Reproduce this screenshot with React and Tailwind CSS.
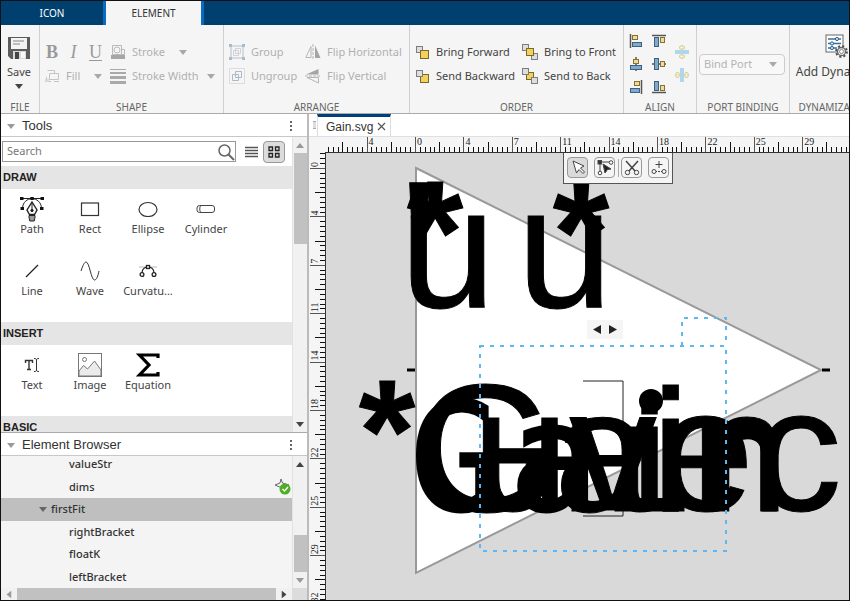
import { useState } from 'react';
import clsx from 'clsx';

const TREE = [
  { name: 'valueStr' },
  { name: 'dims', badge: true },
  { name: 'firstFit', group: true },
  { name: 'rightBracket' },
  { name: 'floatK' },
  { name: 'leftBracket' },
];

const RULER_STEP = 48.4;
const RULER_LABELS = ['4', '0', '4', '7', '11', '14', '18', '22', '25', '29', '32'];

const range = (n) => Array.from({ length: n }, (_, i) => i);

/* ---------- small shared pieces ---------- */

function Caret({ className }) {
  return (
    <svg width="8" height="5" viewBox="0 0 8 5" className={clsx('shrink-0', className)} fill="currentColor">
      <path d="M0 0h8L4 5z" />
    </svg>
  );
}

function Section({ label, className, children }) {
  return (
    <section className={clsx('flex shrink-0 flex-col border-r border-[#cfcfcf] pt-[15px]', className)}>
      <div className="min-h-0 flex-1">{children}</div>
      <h2 className="text-center text-[10px] leading-3 whitespace-nowrap text-[#666]">{label}</h2>
    </section>
  );
}

function ToolButton({ icon, children, dim, caret, className }) {
  return (
    <button
      className={clsx(
        'flex h-6 items-center gap-1.5 text-[11px] whitespace-nowrap',
        dim ? 'text-[#b0b0b0]' : 'text-[#444]',
        className
      )}
    >
      <span className="shrink-0">{icon}</span>
      <span>{children}</span>
      {caret && <Caret className="ml-auto text-[#a8a8a8]" />}
    </button>
  );
}

/* ---------- toolbar icons ---------- */

const SaveIcon = () => (
  <svg width="24" height="24" viewBox="0 0 24 24">
    <path d="M1 1h22v22H4l-3-3z" fill="#5c5c5c" />
    <path d="M4 2h16v11H4z" fill="#f4f4f4" />
    <path d="M6 5h11M6 8h7" stroke="#aaa" strokeWidth="1.3" />
    <path d="M6 15h13v8H6z" fill="#d8d8d8" />
    <path d="M8 16h4v7H8z" fill="#444" />
    <path d="M14 16h4v6h-4z" fill="#f8f8f8" />
  </svg>
);

const StrokeIcon = () => (
  <svg width="16" height="16" viewBox="0 0 16 16" fill="none" stroke="#b9b9b9">
    <path d="M2.5 1.5h9v9h-9zM12 5.5h2.5v5H12" />
    <circle cx="7" cy="6" r="3" />
    <path d="M1 11h14v4H1z" fill="#a6a6a6" stroke="none" />
  </svg>
);

const FillIcon = () => (
  <svg width="16" height="16" viewBox="0 0 16 16" fill="none" stroke="#c4c4c4">
    <path d="M3.5 2.5h7v3M2.5 9v4M5.5 5.5h9v6h-9zM1 13.5h6M10 13.5h5" />
    <path d="M1 11h4v3H1z" fill="#d8d8d8" stroke="none" />
  </svg>
);

const WidthIcon = () => (
  <svg width="16" height="16" viewBox="0 0 16 16" fill="#a9a9a9">
    <path d="M0 1h16v1H0zM0 4h16v2H0zM0 8h16v3H0zM0 13h16v3H0z" />
  </svg>
);

const GroupIcon = () => (
  <svg width="16" height="16" viewBox="0 0 16 16" fill="none">
    <path d="M2 2h12v12H2z" stroke="#b4bfc9" />
    <path d="M4.5 6.5h5v5h-5zM6.5 4.5h5v5h-5z" stroke="#cdd3d8" />
    <path d="M0 0h3v3H0zM13 0h3v3h-3zM0 13h3v3H0zM13 13h3v3h-3z" fill="#a9bac9" />
  </svg>
);

const UngroupIcon = () => (
  <svg width="16" height="16" viewBox="0 0 16 16" fill="none">
    <path d="M.5.5h15v15H.5z" stroke="#dcdcdc" />
    <path d="M3.5 6.5h6v6h-6zM6.5 3.5h6v6h-6z" stroke="#aab9cb" />
  </svg>
);

const FlipHIcon = () => (
  <svg width="16" height="16" viewBox="0 0 16 16" fill="none">
    <path d="M6 2.5V13.5H.8z" stroke="#b5b5b5" />
    <path d="M8 0v16" stroke="#b5b5b5" strokeDasharray="3 1" />
    <path d="M10 1.5V14h5.5z" fill="#a4a4a4" />
  </svg>
);

const FlipVIcon = () => (
  <svg width="16" height="16" viewBox="0 0 16 16" fill="none">
    <path d="M13.5 1v5.5H1z" fill="#a4a4a4" />
    <path d="M0 8h16" stroke="#b5b5b5" strokeDasharray="3 1" />
    <path d="M2 9.5h11.5V15z" stroke="#b5b5b5" />
  </svg>
);

function OrderIcon({ kind }) {
  const gray = { fill: '#dedede', stroke: '#7d7d7d' };
  const gold = { fill: '#f3d25c', stroke: '#7c682a' };
  const back = <rect x="1.5" y="1.5" width="6" height="6" {...gray} />;
  if (kind === 'forward' || kind === 'backward') {
    const front = <rect x="5.5" y="5.5" width="8" height="8" {...gold} />;
    return (
      <svg width="15" height="15" viewBox="0 0 15 15">
        {kind === 'forward' ? back : front}
        {kind === 'forward' ? front : back}
      </svg>
    );
  }
  const mid = <rect x="4.5" y="4.5" width="7" height="7" {...gold} />;
  const grays = (
    <>
      <rect x=".5" y=".5" width="6" height="6" {...gray} />
      <rect x="9.5" y="9.5" width="6" height="6" {...gray} />
    </>
  );
  return (
    <svg width="16" height="16" viewBox="0 0 16 16">
      {kind === 'front' ? grays : mid}
      {kind === 'front' ? mid : grays}
    </svg>
  );
}

const blue = { fill: '#7fa9cf', stroke: '#3f6180' };
const tan = { fill: '#f0dc9a', stroke: '#8a7030' };

const ALIGN_ICONS = {
  left: (
    <>
      <path d="M1.5 0v14" stroke="#555" strokeWidth="1.5" />
      <rect x="3.5" y="1.5" width="5" height="4" {...tan} />
      <rect x="3.5" y="8.5" width="9" height="4" {...blue} />
    </>
  ),
  center: (
    <>
      <path d="M7 0v14" stroke="#555" strokeWidth="1.5" />
      <rect x="4.5" y="2.5" width="5" height="4" {...tan} />
      <rect x="1.5" y="8.5" width="11" height="4" {...blue} />
    </>
  ),
  right: (
    <>
      <path d="M12.5 0v14" stroke="#555" strokeWidth="1.5" />
      <rect x="5.5" y="1.5" width="5" height="4" {...tan} />
      <rect x="1.5" y="8.5" width="9" height="4" {...blue} />
    </>
  ),
  top: (
    <>
      <path d="M0 1.5h14" stroke="#555" strokeWidth="1.5" />
      <rect x="2.5" y="3.5" width="4" height="9" {...blue} />
      <rect x="8.5" y="3.5" width="4" height="5" {...tan} />
    </>
  ),
  middle: (
    <>
      <path d="M0 7h14" stroke="#555" strokeWidth="1.5" />
      <rect x="2.5" y="1.5" width="4" height="11" {...blue} />
      <rect x="8.5" y="4.5" width="4" height="5" {...tan} />
    </>
  ),
  bottom: (
    <>
      <path d="M0 12.5h14" stroke="#555" strokeWidth="1.5" />
      <rect x="2.5" y="1.5" width="4" height="9" {...blue} />
      <rect x="8.5" y="5.5" width="4" height="5" {...tan} />
    </>
  ),
  spreadV: (
    <g opacity=".6">
      <path d="M7 0v14" stroke="#999" />
      <rect x="4.5" y="1" width="5" height="3" rx="1" fill="#f7f0a0" stroke="#c2b860" />
      <rect x="0" y="5" width="14" height="4" fill="#7fc4ea" />
      <rect x="4.5" y="10" width="5" height="3" rx="1" fill="#f7f0a0" stroke="#c2b860" />
    </g>
  ),
  spreadH: (
    <g opacity=".6">
      <path d="M0 7h14" stroke="#999" />
      <rect x="1" y="4.5" width="3" height="5" rx="1" fill="#f7f0a0" stroke="#c2b860" />
      <rect x="5" y="0" width="4" height="14" fill="#7fc4ea" />
      <rect x="10" y="4.5" width="3" height="5" rx="1" fill="#f7f0a0" stroke="#c2b860" />
    </g>
  ),
};

function AlignButton({ kind }) {
  return (
    <button aria-label={`Align ${kind}`} className="flex h-[23px] items-center">
      <svg width="14" height="14" viewBox="0 0 14 14">
        {ALIGN_ICONS[kind]}
      </svg>
    </button>
  );
}

const DynamizeIcon = () => (
  <svg width="24" height="24" viewBox="0 0 24 24" fill="none">
    <rect x="2" y="1" width="17" height="17" fill="#fff" stroke="#666" />
    <path d="M4 5h13M4 9.5h13M4 14h9" stroke="#3f6d96" strokeWidth="1.3" />
    <g fill="#cfe4f5" stroke="#2b6294">
      <circle cx="13" cy="5" r="1.6" />
      <circle cx="8" cy="9.5" r="1.6" />
      <circle cx="8" cy="14" r="1.6" />
    </g>
    <circle cx="17.5" cy="17.5" r="5.3" stroke="#555" strokeWidth="2.2" strokeDasharray="2.1 2.06" />
    <circle cx="17.5" cy="17.5" r="4" fill="#f2f2f2" stroke="#666" strokeWidth="1.3" />
    <circle cx="17.5" cy="17.5" r="2" fill="#fff" stroke="#888" />
  </svg>
);

/* ---------- palette icons ---------- */

const PALETTE_ICONS = {
  Path: (
    <svg width="26" height="26" viewBox="0 0 26 26" fill="none" stroke="#222">
      <path d="M3 2.5h20M13 2.5C8 3 4 6 3.5 12M13 2.5c5 .5 9 3.5 9.5 9.5" />
      <g fill="#111" stroke="none">
        <path d="M1 1h3.5v3H1zM11.3 1h3.5v3h-3.5zM21.5 1H25v3h-3.5zM1.5 11H5v3H1.5zM21 11h3.5v3H21z" />
      </g>
      <path d="M13 6l5 8-2.5 4.5h-5L8 14z" fill="#fff" strokeWidth="1.4" />
      <path d="M13 6v8" />
      <circle cx="13" cy="14.5" r="1.2" fill="#222" />
      <path d="M10 19.5h6v2l-.8 3.5h-4.4L10 21.5z" fill="#999" />
    </svg>
  ),
  Rect: (
    <svg width="20" height="16" viewBox="0 0 20 16" fill="none" stroke="#333">
      <rect x="1.5" y="2" width="17" height="12.5" strokeWidth="1.2" />
    </svg>
  ),
  Ellipse: (
    <svg width="22" height="16" viewBox="0 0 22 16" fill="none" stroke="#333">
      <ellipse cx="11" cy="8.5" rx="9" ry="7" strokeWidth="1.2" />
    </svg>
  ),
  Cylinder: (
    <svg width="20" height="10" viewBox="0 0 20 10" fill="none" stroke="#444">
      <rect x="1" y="1.5" width="17.5" height="7" rx="2.5" />
      <path d="M4.5 1.5c-1 2-1 5 0 7" />
    </svg>
  ),
  Line: (
    <svg width="14" height="14" viewBox="0 0 14 14" fill="none" stroke="#222">
      <path d="M1 13L13 1" strokeWidth="1.2" />
    </svg>
  ),
  Wave: (
    <svg width="20" height="20" viewBox="0 0 20 20" fill="none" stroke="#333">
      <path d="M1 10C3 4 4.5 1 6 1c3.5 0 5 18 8.5 18 2 0 3.5-4 4.5-9" />
    </svg>
  ),
  'Curvatu...': (
    <svg width="20" height="16" viewBox="0 0 20 16" fill="none" stroke="#222">
      <path d="M1 4h18" stroke="#bbb" />
      <path d="M4 10c0-4 3-6 6-6s6 2 6 6" strokeWidth="1.3" />
      <rect x="8.5" y="2.5" width="3" height="3" fill="#fff" strokeWidth="1.3" />
      <circle cx="4" cy="11.5" r="1.9" fill="#fff" strokeWidth="1.3" />
      <circle cx="16" cy="11.5" r="1.9" fill="#fff" strokeWidth="1.3" />
    </svg>
  ),
  Text: (
    <svg width="18" height="16" viewBox="0 0 18 16" fill="none" stroke="#333">
      <path d="M2.5 6V3.5h7V6M6 3.5v9M4 12.5h4" strokeWidth="1.4" />
      <path d="M11 1.5c2 0 2.5.5 2.5 1.5v10c0 1-.5 1.5-2.5 1.5M16 1.5c-2 0-2.5.5-2.5 1.5M16 14.5c-2 0-2.5-.5-2.5-1.5" />
    </svg>
  ),
  Image: (
    <svg width="24" height="24" viewBox="0 0 24 24" fill="none" stroke="#777">
      <path d="M1 18l4.5-5.5 4 3.5 7-8 6.5 9v6H1z" fill="#ebebeb" />
      <rect x=".5" y=".5" width="23" height="23" />
      <circle cx="6.5" cy="6.5" r="2" />
    </svg>
  ),
  Equation: (
    <svg width="24" height="26" viewBox="0 0 24 26" fill="none" stroke="#000">
      <path d="M22 6V3H3.5L13 13 3.5 23H22v-3" strokeWidth="3.2" />
    </svg>
  ),
};

function Palette({ title, items }) {
  return (
    <>
      <h3 className="h-[23px] shrink-0 bg-[#e5e5e5] pl-0.5 font-['Liberation_Sans',sans-serif] text-[11px] leading-[23px] font-bold text-[#222]">
        {title}
      </h3>
      {items && (
        <div className="flex w-[236px] shrink-0 flex-wrap pb-[9px] pl-0.5">
          {items.map((name) => (
            <button key={name} className="flex h-[62px] w-[58px] flex-col items-center pt-1.5 text-[11px] leading-3 text-[#444]">
              <span className="flex h-7 items-center">{PALETTE_ICONS[name]}</span>
              {name}
            </button>
          ))}
        </div>
      )}
    </>
  );
}

function PanelHeader({ title }) {
  return (
    <header className="flex h-[23px] shrink-0 items-center border-b border-[#c8c8c8] bg-white pt-0.5 pr-3.5 pl-1.5">
      <Caret className="text-[#999]" />
      <h2 className="ml-[7px] flex-1 font-['Liberation_Sans',sans-serif] text-[13px] leading-4 text-[#333]">{title}</h2>
      <button aria-label={`${title} menu`}>
        <svg width="3" height="11" viewBox="0 0 3 11" fill="#666">
          <path d="M0 0h2v2H0zM0 4h2v2H0zM0 8h2v2H0z" />
        </svg>
      </button>
    </header>
  );
}

function ToolsPanel() {
  const [query, setQuery] = useState('');

  return (
    <section className="flex min-h-0 flex-1 flex-col">
      <PanelHeader title="Tools" />
      <div className="flex min-h-0 flex-1">
        <div className="flex min-h-0 min-w-0 flex-1 flex-col overflow-hidden">
          <div className="flex h-[29px] shrink-0 items-center pl-px">
            <label className="flex h-[21px] flex-1 items-center border border-[#999] bg-white">
              <input
                aria-label="Search tools"
                placeholder="Search"
                value={query}
                onChange={(e) => setQuery(e.target.value)}
                className="min-w-0 flex-1 pl-1 text-[11px] text-[#333] outline-none placeholder:text-[#777]"
              />
              <svg width="18" height="18" viewBox="0 0 18 18" fill="none" stroke="#666">
                <circle cx="7.5" cy="7.5" r="5.5" strokeWidth="1.5" />
                <path d="M11.5 11.5L17 17" strokeWidth="2" />
              </svg>
            </label>
            <button aria-label="List view" className="ml-2 p-px">
              <svg width="13" height="12" viewBox="0 0 13 12" stroke="#555" strokeWidth="1.3">
                <path d="M0 1.5h13M0 4.5h13M0 7.5h13M0 10.5h13" />
              </svg>
            </button>
            <button
              aria-label="Grid view"
              className="mr-[7px] ml-1 flex size-[22px] items-center justify-center rounded border border-[#999] bg-[#dcdcdc]"
            >
              <svg width="12" height="12" viewBox="0 0 12 12" fill="none" stroke="#222" strokeWidth="1.3">
                <path d="M1 1h3.5v3.5H1zM7.5 1H11v3.5H7.5zM1 7.5h3.5V11H1zM7.5 7.5H11V11H7.5z" />
              </svg>
            </button>
          </div>
          <Palette title="DRAW" items={['Path', 'Rect', 'Ellipse', 'Cylinder', 'Line', 'Wave', 'Curvatu...']} />
          <Palette title="INSERT" items={['Text', 'Image', 'Equation']} />
          <Palette title="BASIC" />
        </div>
        <div className="flex w-[15px] shrink-0 flex-col items-center border-l border-[#e2e2e2] bg-[#f1f1f1]">
          <span className="flex h-4 items-center">
            <Caret className="rotate-180 text-[#999]" />
          </span>
          <div className="h-[91px] w-[13px] bg-[#c1c1c1]" />
          <span className="mt-auto flex h-4 items-center">
            <Caret className="text-[#444]" />
          </span>
        </div>
      </div>
    </section>
  );
}

function ElementBrowser() {
  const [selected, setSelected] = useState('firstFit');

  return (
    <section className="flex shrink-0 flex-col border-t border-[#aaa] bg-[#f4f4f4]">
      <PanelHeader title="Element Browser" />
      <div className="flex h-[132px]">
        <div className="flex flex-1 items-end overflow-hidden">
          <ul className="flex h-[135px] w-full shrink-0 flex-col text-[11px] font-medium text-[#333]">
            {TREE.map(({ name, group, badge }) => (
              <li key={name} className="flex flex-1">
                <button
                  onClick={() => setSelected(name)}
                  className={clsx(
                    'flex flex-1 items-center pr-px',
                    group ? 'pl-[38px]' : 'pl-[68px]',
                    selected === name && 'bg-[#bfbfbf]'
                  )}
                >
                  {group && <Caret className="mr-1 text-[#666]" />}
                  {name}
                  {badge && (
                    <svg width="17" height="16" viewBox="0 0 17 16" className="ml-auto" fill="none">
                      <path d="M7 0l1.5 4L15 6 8 9 1 6l5-2z" stroke="#666" />
                      <circle cx="11" cy="10" r="5.5" fill="#4fae27" />
                      <path d="M8.5 10l2 2 3.5-4" stroke="#fff" strokeWidth="1.4" />
                    </svg>
                  )}
                </button>
              </li>
            ))}
          </ul>
        </div>
        <div className="flex w-[15px] flex-col items-center border-l border-[#e2e2e2] bg-[#f1f1f1]">
          <span className="flex h-4 items-center">
            <Caret className="rotate-180 text-[#444]" />
          </span>
          <div className="mt-auto h-[37px] w-[13px] bg-[#c1c1c1]" />
          <span className="flex h-4 items-center">
            <Caret className="text-[#999]" />
          </span>
        </div>
      </div>
      <div className="flex h-3 items-center bg-[#f1f1f1]">
        <Caret className="mx-1 rotate-90 text-[#999]" />
        <div className="h-full flex-1 bg-[#c1c1c1]" />
        <Caret className="mx-1 -rotate-90 text-[#444]" />
        <div className="h-full w-[15px] bg-[#dcdcdc]" />
      </div>
    </section>
  );
}

/* ---------- canvas ---------- */

function tickLength(i) {
  if (i % 10 === 0) return 15;
  return i % 5 === 0 ? 10 : 5;
}

function HRuler() {
  const zero = 90;
  return (
    <svg className="h-[15px] w-full">
      {range(150).map((n) => {
        const i = n - 18;
        const x = Math.round(zero + (i * RULER_STEP) / 10) + 0.5;
        return <path key={i} d={`M${x} 15v-${tickLength(i)}`} stroke={i % 10 === 0 ? '#555' : '#111'} />;
      })}
      {RULER_LABELS.slice(0, 10).map((label, i) => (
        <text
          key={i}
          x={zero + 2 + (i - 1) * RULER_STEP}
          y="8"
          fontSize="10"
          fill="#222"
          className="font-['Liberation_Serif',serif]"
        >
          {label}
        </text>
      ))}
    </svg>
  );
}

function VRuler() {
  const zero = 16;
  return (
    <svg className="h-full w-4 shrink-0 bg-[#f5f5f5]">
      {range(140).map((n) => {
        const i = n - 3;
        const y = Math.round(zero + (i * RULER_STEP) / 10) + 0.5;
        return <path key={i} d={`M16 ${y}h-${tickLength(i)}`} stroke={i % 10 === 0 ? '#555' : '#111'} />;
      })}
      {RULER_LABELS.slice(1).map((label, i) => (
        <text
          key={i}
          transform={`translate(9 ${zero - 1 + i * RULER_STEP}) rotate(-90)`}
          fontSize="10"
          fill="#222"
          className="font-['Liberation_Serif',serif]"
        >
          {label}
        </text>
      ))}
    </svg>
  );
}

function Drawing() {
  return (
    <svg className="block h-full w-full">
      <path d="M90 15L495 217L90 420z" fill="#fff" stroke="#999" strokeWidth="2" />
      <path d="M81 217h8M496 217h8" stroke="#000" strokeWidth="3" />
      <path d="M257 228h40v135h-40" fill="none" stroke="#222" />

      {/* port labels and block text all render on top of each other */}
      <g stroke="#000" className="font-['Liberation_Sans',Arial,sans-serif]">
        <g fontSize="144" fontWeight="700">
          <text x="76" y="130">'</text>
          <text x="81" y="129">*</text>
          <text x="227" y="129">*</text>
          <text x="33" y="328">*</text>
        </g>
        <g fontSize="172">
          <text x="74" y="154">u</text>
          <text x="191" y="154">u</text>
        </g>
        <g fontSize="175">
          <text x="146" y="357">uvec</text>
          <text x="88" y="358">
            <tspan fontSize="182">G</tspan>
            <tspan x="228">ain</tspan>
          </text>
        </g>
      </g>
      <text
        x="84 183 277 374"
        y="357"
        fontSize="150"
        stroke="#000"
        strokeWidth="3"
        className="font-['DejaVu_Sans_Mono',monospace]"
      >
        Gain
      </text>
      <circle cx="325" cy="248" r="12" />

      <g fill="none" stroke="#5cb8f5" strokeWidth="2" strokeDasharray="4 6">
        <rect x="154" y="193" width="246" height="205" />
        <path d="M356 193v-28h44v28" />
      </g>
    </svg>
  );
}

const CANVAS_TOOLS = {
  Select: <path d="M4 2l3.5 12 2.5-3.5 4 4 1.5-1.5-4-4 3.5-2z" fill="#fff" />,
  'Edit points': (
    <>
      <path d="M4 3v11M4 3h11" />
      <path d="M7 5l8 5-3.5.5L9 14z" fill="#222" />
      <rect x="2" y="1.5" width="3.5" height="3.5" fill="#333" />
      <circle cx="15" cy="3.5" r="1.8" fill="#fff" />
      <circle cx="4" cy="14" r="1.8" fill="#fff" />
    </>
  ),
  Cut: (
    <>
      <path d="M3 2l9 10M15 2L6 12" strokeWidth="1.5" />
      <circle cx="4.5" cy="13.5" r="2.2" />
      <circle cx="13.5" cy="13.5" r="2.2" />
    </>
  ),
  'Add point': (
    <>
      <path d="M9 2v7M5.5 5.5h7" />
      <path d="M5 12.5h8" strokeDasharray="2 1" />
      <circle cx="4" cy="12.5" r="2" fill="#fff" />
      <circle cx="14" cy="12.5" r="2" fill="#fff" />
    </>
  ),
};

function Canvas() {
  const [tool, setTool] = useState('Select');

  return (
    <main className="flex min-w-0 flex-1 flex-col bg-white">
      <div className="flex h-[22px] shrink-0 items-center">
        <div className="mr-px ml-1 h-2 w-[3px] border-y border-[#aaa] bg-[#ddd]" />
        <div className="flex h-full items-center gap-1 border-x border-t-3 border-x-[#ddd] border-t-[#00407a] bg-white pr-1 pl-2">
          <span className="font-['Liberation_Sans',sans-serif] text-xs text-[#333]">Gain.svg</span>
          <button aria-label="Close Gain.svg">
            <svg width="9" height="9" viewBox="0 0 9 9" stroke="#555" strokeWidth="1.2">
              <path d="M1 1l7 7M8 1L1 8" />
            </svg>
          </button>
        </div>
      </div>
      <div className="flex shrink-0 border-t border-[#dcdfe4] bg-[#f5f5f5] pl-4">
        <HRuler />
      </div>
      <div className="flex min-h-0 flex-1">
        <VRuler />
        <div className="relative min-w-0 flex-1 overflow-hidden border-t border-l border-[#333] bg-[#d9d9d9]">
          <Drawing />
          <div className="absolute top-0 left-[237px] flex items-center gap-1.5 border border-t-0 border-[#555] bg-[#f5f5f5] px-[3px] pt-1 pb-[5px]">
            {Object.keys(CANVAS_TOOLS).map((name) => (
              <button
                key={name}
                aria-label={name}
                onClick={() => setTool(name)}
                className={clsx(
                  'flex size-[21px] items-center justify-center rounded border border-[#999]',
                  tool === name && 'bg-[#dadada]'
                )}
              >
                <svg width="18" height="18" viewBox="0 0 18 18" fill="none" stroke="#444">
                  {CANVAS_TOOLS[name]}
                </svg>
              </button>
            ))}
            <span className="absolute left-[54px] h-[18px] w-px bg-[#aaa]" />
          </div>
          <div className="absolute top-[167px] left-[261px] flex h-[19px] items-center gap-2 bg-[#f5f5f5] px-1.5">
            <button aria-label="Previous">
              <svg width="8" height="9" viewBox="0 0 8 9" fill="#222">
                <path d="M8 0v9L0 4.5z" />
              </svg>
            </button>
            <button aria-label="Next">
              <svg width="8" height="9" viewBox="0 0 8 9" fill="#222">
                <path d="M0 0v9l8-4.5z" />
              </svg>
            </button>
          </div>
        </div>
      </div>
    </main>
  );
}

/* ---------- ribbon ---------- */

function Ribbon() {
  return (
    <div className="flex h-[89px] shrink-0 overflow-hidden border-b border-[#aaa] bg-[#f5f5f5]">
      <Section label="FILE" className="w-[39px]">
        <button className="-mt-1 flex w-full flex-col items-center gap-0.5 pr-0.5 text-[11px] leading-5 text-[#444]">
          <SaveIcon />
          Save
          <Caret className="text-[#444]" />
        </button>
      </Section>

      <Section label="SHAPE" className="w-[184px]">
        <div className="grid grid-cols-[66px_105px] pl-1">
          <div className="flex h-6 items-center justify-between pr-2 pl-0.5 font-['Liberation_Serif',serif] text-lg text-[#999]">
            <button className="font-bold">B</button>
            <button className="italic">I</button>
            <button className="underline underline-offset-2">U</button>
          </div>
          <ToolButton icon={<StrokeIcon />} dim caret className="pr-7">
            Stroke
          </ToolButton>
          <ToolButton icon={<FillIcon />} dim caret className="pr-2">
            Fill
          </ToolButton>
          <ToolButton icon={<WidthIcon />} dim caret>
            Stroke Width
          </ToolButton>
        </div>
      </Section>

      <Section label="ARRANGE" className="w-[186px]">
        <div className="grid grid-cols-[76px_auto] pl-[5px]">
          <ToolButton icon={<GroupIcon />} dim>Group</ToolButton>
          <ToolButton icon={<FlipHIcon />} dim>Flip Horizontal</ToolButton>
          <ToolButton icon={<UngroupIcon />} dim>Ungroup</ToolButton>
          <ToolButton icon={<FlipVIcon />} dim>Flip Vertical</ToolButton>
        </div>
      </Section>

      <Section label="ORDER" className="w-[214px]">
        <div className="grid grid-cols-[107px_auto] pl-[5px]">
          <ToolButton icon={<OrderIcon kind="forward" />}>Bring Forward</ToolButton>
          <ToolButton icon={<OrderIcon kind="front" />}>Bring to Front</ToolButton>
          <ToolButton icon={<OrderIcon kind="backward" />}>Send Backward</ToolButton>
          <ToolButton icon={<OrderIcon kind="back" />}>Send to Back</ToolButton>
        </div>
      </Section>

      <Section label="ALIGN" className="w-[73px]">
        <div className="-mt-[11px] flex items-center gap-[9px] pl-[5px]">
          <div>
            <AlignButton kind="left" />
            <AlignButton kind="center" />
            <AlignButton kind="right" />
          </div>
          <div>
            <AlignButton kind="top" />
            <AlignButton kind="middle" />
            <AlignButton kind="bottom" />
          </div>
          <div>
            <AlignButton kind="spreadV" />
            <AlignButton kind="spreadH" />
          </div>
        </div>
      </Section>

      <Section label="PORT BINDING" className="w-[93px]">
        <div className="relative mr-1 ml-0.5 pt-3.5">
          <select
            aria-label="Bind port"
            className="block h-[21px] w-full appearance-none rounded border border-[#ccc] bg-[#f8f8f8] pl-1 text-[11px] text-[#b4b4b4]"
          >
            <option>Bind Port</option>
          </select>
          <Caret className="pointer-events-none absolute right-2 bottom-2 text-[#aaa]" />
        </div>
      </Section>

      <Section label="DYNAMIZATION" className="w-[92px] border-r-0">
        <button className="-mt-1.5 flex w-full flex-col items-center gap-1 text-xs leading-5 whitespace-nowrap text-[#444]">
          <DynamizeIcon />
          Add Dynamics
        </button>
      </Section>
    </div>
  );
}

export default function App() {
  return (
    <div className="flex h-screen flex-col overflow-hidden border border-[#111] bg-white font-['Noto_Sans','Open_Sans',sans-serif]">
      <nav className="flex h-6 shrink-0 bg-[#00406f] text-[10px]">
        <button className="w-[102px] text-white">ICON</button>
        <button className="w-[101px] border-x-3 border-[#0a6bc4] bg-[#f5f5f5] text-[#333]">ELEMENT</button>
      </nav>
      <Ribbon />
      <div className="flex min-h-0 flex-1">
        <aside className="flex w-[308px] shrink-0 flex-col border-r-2 border-[#bbb]">
          <ToolsPanel />
          <ElementBrowser />
        </aside>
        <Canvas />
      </div>
    </div>
  );
}
